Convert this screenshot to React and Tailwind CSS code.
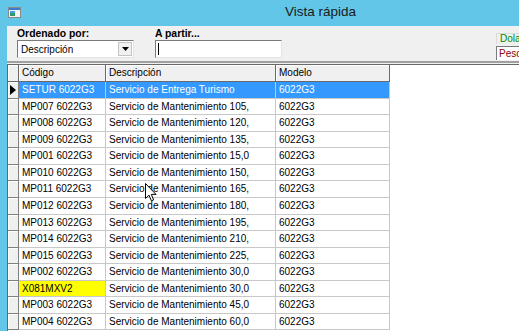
import React from 'react';

const rows = [
  ['SETUR 6022G3', 'Servicio de Entrega Turismo', '6022G3'],
  ['MP007 6022G3', 'Servicio de Mantenimiento 105,', '6022G3'],
  ['MP008 6022G3', 'Servicio de Mantenimiento 120,', '6022G3'],
  ['MP009 6022G3', 'Servicio de Mantenimiento 135,', '6022G3'],
  ['MP001 6022G3', 'Servicio de Mantenimiento 15,0', '6022G3'],
  ['MP010 6022G3', 'Servicio de Mantenimiento 150,', '6022G3'],
  ['MP011 6022G3', 'Servicio de Mantenimiento 165,', '6022G3'],
  ['MP012 6022G3', 'Servicio de Mantenimiento 180,', '6022G3'],
  ['MP013 6022G3', 'Servicio de Mantenimiento 195,', '6022G3'],
  ['MP014 6022G3', 'Servicio de Mantenimiento 210,', '6022G3'],
  ['MP015 6022G3', 'Servicio de Mantenimiento 225,', '6022G3'],
  ['MP002 6022G3', 'Servicio de Mantenimiento 30,0', '6022G3'],
  ['X081MXV2', 'Servicio de Mantenimiento 30,0', '6022G3'],
  ['MP003 6022G3', 'Servicio de Mantenimiento 45,0', '6022G3'],
  ['MP004 6022G3', 'Servicio de Mantenimiento 60,0', '6022G3'],
];

function AppIcon() {
  return (
    <svg width="13" height="11" viewBox="0 0 13 11">
      <rect x="0.5" y="0.5" width="12" height="10" fill="#f4f4f4" stroke="#8a8a8a" />
      <rect x="1" y="1" width="11" height="2" fill="#3a7bd5" />
      <rect x="2" y="4" width="5" height="5" fill="#2e9a6a" />
      <rect x="2" y="4" width="5" height="2" fill="#4aa0d8" />
    </svg>
  );
}

function Cursor() {
  return (
    <svg width="12" height="19" viewBox="0 0 12 19" className="absolute left-[145px] top-[183px]">
      <path d="M0.5 0.5 L0.5 15.5 L4 12.2 L6.4 17.8 L8.6 16.9 L6.3 11.4 L11 11.4 Z" fill="#fff" stroke="#000" strokeWidth="1" strokeLinejoin="miter" />
    </svg>
  );
}

export default function App() {
  return (
    <div className="relative w-[519px] h-[331px] overflow-hidden bg-[#62c6e8] flex flex-col font-['Liberation_Sans',Arial,sans-serif] text-black">
      {/* Barra de título */}
      <div className="h-[26px] shrink-0 flex items-center">
        <div className="ml-[8px] -mt-[2px]">
          <AppIcon />
        </div>
        <div className="ml-[264px] -mt-[2px] text-[13.5px] text-[#1a1a1a]">Vista rápida</div>
      </div>

      {/* Cuerpo */}
      <div className="flex-1 ml-[7px] bg-[#f0f0f0] flex flex-col min-h-0">
        {/* Filtros */}
        <div className="h-[37px] shrink-0 flex border-b-2 border-[#a0a0a0] pt-[2px] overflow-hidden">
          <div className="ml-[10px] flex flex-col">
            <div className="text-[10.4px] font-bold leading-[12px]">Ordenado por:</div>
            <div className="w-[117px] h-[18px] bg-white border border-t-[#7a7a7a] border-l-[#7a7a7a] border-r-[#e3e3e3] border-b-[#e3e3e3] flex items-center">
              <span className="flex-1 pl-[3px] text-[10px]">Descripción</span>
              <div className="w-[14px] h-[14px] mr-[1px] bg-[#f0f0f0] border border-[#c4c4c4] flex items-center justify-center">
                <svg width="7" height="4" viewBox="0 0 7 4">
                  <path d="M0 0 H7 L3.5 4 Z" fill="#000" />
                </svg>
              </div>
            </div>
          </div>
          <div className="ml-[21px] flex flex-col">
            <div className="text-[10.4px] font-bold leading-[12px]">A partir...</div>
            <div className="w-[127px] h-[18px] bg-white border border-t-[#7a7a7a] border-l-[#7a7a7a] border-r-[#e3e3e3] border-b-[#e3e3e3] flex items-center">
              <span className="ml-[2px] w-px h-[12px] bg-black" />
            </div>
          </div>
          <div className="ml-[214px] shrink-0 w-[60px] flex flex-col pt-[5px]">
            <div className="h-[11px] border-t border-l border-[#dadada] text-[10px] leading-[10px] text-[#008a00] pl-[3px]">Dolares</div>
            <div className="mt-[2px] h-[14px] bg-white border-t border-l border-[#7a7a7a] text-[10px] leading-[13px] text-[#8b0000] pl-[2px]">Pesos</div>
          </div>
        </div>

        {/* Rejilla */}
        <div className="flex-1 bg-white border-t border-l border-[#696969] text-[10px] leading-[16px] mt-px">
          <div className="flex h-[17px]">
            <div className="w-[11px] bg-[#f0f0f0] border-r border-b border-[#696969] shadow-[inset_1px_1px_0_#fff]" />
            <div className="w-[87px] bg-[#f0f0f0] border-r border-b border-[#696969] shadow-[inset_1px_1px_0_#fff] pl-[3px]">Código</div>
            <div className="w-[170px] bg-[#f0f0f0] border-r border-b border-[#696969] shadow-[inset_1px_1px_0_#fff] pl-[3px]">Descripción</div>
            <div className="w-[114px] bg-[#f0f0f0] border-r border-b border-[#696969] shadow-[inset_1px_1px_0_#fff] pl-[3px]">Modelo</div>
          </div>
          {rows.map((r, i) => {
            const sel = i === 0;
            const marked = r[0] === 'X081MXV2';
            return (
              <div key={i} className="flex h-[16.57px]">
                <div className="w-[11px] bg-[#f0f0f0] border-r border-b border-[#808080] shadow-[inset_1px_1px_0_#fff] flex items-center">
                  {sel && (
                    <svg width="6" height="10" viewBox="0 0 6 10" className="ml-[2px]">
                      <path d="M0 0 L6 5 L0 10 Z" fill="#000" />
                    </svg>
                  )}
                </div>
                <div className={'w-[87px] border-r border-b border-[#c8c8c8] pl-[3px] whitespace-nowrap overflow-hidden ' + (sel ? 'bg-[#3399ff] text-white' : marked ? 'bg-[#ffff00]' : '')}>
                  {r[0]}
                </div>
                <div className={'w-[170px] border-r border-b border-[#c8c8c8] pl-[3px] whitespace-nowrap overflow-hidden ' + (sel ? 'bg-[#3399ff] text-white' : '')}>
                  {r[1]}
                </div>
                <div className={'w-[114px] border-r border-b border-[#c8c8c8] pl-[3px] whitespace-nowrap overflow-hidden ' + (sel ? 'bg-[#3399ff] text-white' : '')}>
                  {r[2]}
                </div>
              </div>
            );
          })}
        </div>
      </div>

      <Cursor />
    </div>
  );
}
